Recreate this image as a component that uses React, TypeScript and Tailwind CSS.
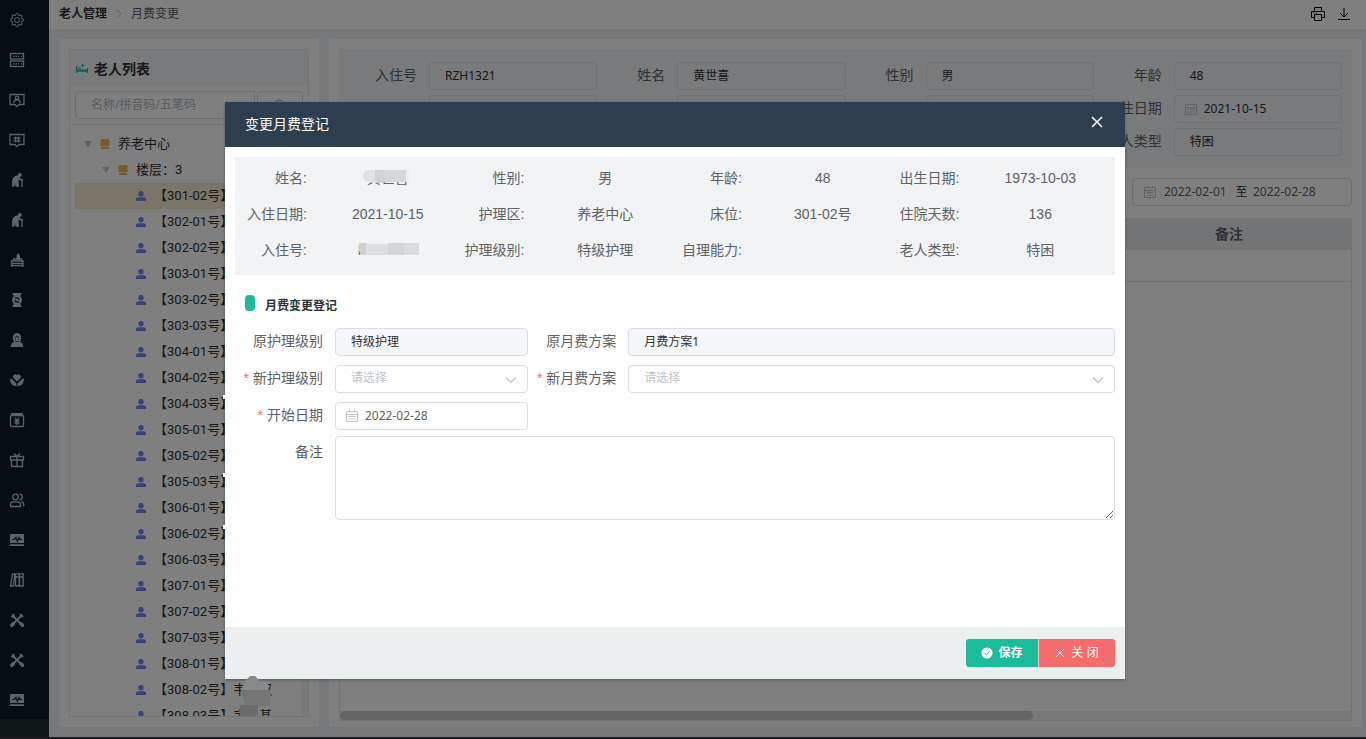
import type { ReactNode } from "react";
import { BsGear } from "react-icons/bs";

const fills = "fill-current stroke-none";

const PulseIcon = (
  <>
    <path className={fills} d="M2 2h12a1 1 0 0 1 1 1v8H1V3a1 1 0 0 1 1-1zM1 12.200h14V14H1z" />
    <path d="M3 7.500h2.500L7 5.500l1.500 4L10 5.500l1 2h2" stroke="#0f1a21" strokeWidth="1.200" />
  </>
);

const ElderIcon = (
  <>
    <circle className={fills} cx="10.800" cy="2.900" r="2" />
    <path className={fills} d="M9.500 3.200C5.500 3.500 3.200 6 3.200 9.500L3 14.800h2.200l.8-3 .7 3h3.500L9.500 10l.3-2.500 2.200 1 2 .3V7.500l-2-.5-1.500-2z" />
    <path d="M13 8v7" />
  </>
);

const ToolsIcon = (
  <>
    <path d="M4 4l8.500 8.500M12.500 3.500l-9 9" strokeWidth="2" />
    <path d="M2 4.500l2.500-.2.200-2.500M11 2l3 3" strokeWidth="2.200" />
    <path d="M12 11.800l1.500 1.500M2.800 13.200l1.500-1.500" strokeWidth="3.500" strokeLinecap="round" />
  </>
);

const menu: { name: string; icon: ReactNode }[] = [
  {
    name: "数据",
    icon: (
      <>
        <rect x="1.500" y="1.500" width="13" height="5.500" />
        <rect x="1.500" y="9" width="13" height="5.500" />
        <path d="M4 4.300h6M12 4.300h1M4 11.800h6M12 11.800h1" strokeDasharray="1.500 1" />
      </>
    ),
  },
  {
    name: "档案",
    icon: (
      <>
        <path d="M1 2.500h14v10h-5L8 14.500l-2-2H1z" />
        <circle cx="8" cy="5.800" r="1.700" />
        <path d="M4.800 11c.3-2.500 1.500-3.500 3.200-3.500s2.900 1 3.200 3.500" />
      </>
    ),
  },
  {
    name: "编号",
    icon: (
      <>
        <path d="M1 2.500h14v10h-5L8 14.500l-2-2H1z" />
        <path d="M6.500 4.500v6M9.500 4.500v6M4.500 6.200h7M4.500 8.800h7" />
      </>
    ),
  },
  { name: "老人", icon: ElderIcon },
  { name: "护理", icon: ElderIcon },
  {
    name: "床位",
    icon: (
      <>
        <path d="M2.500 9h11.500v4.500H2.500zM2.500 11.300H14M3 13v2M13.500 13v2M4.500 9V7h8v2" strokeWidth="1.300" />
        <path className={fills} d="M7.500 7.500V3.500L9.200 1l1.800 2.500v4z" />
      </>
    ),
  },
  {
    name: "膳食",
    icon: (
      <>
        <path className={fills} d="M3.500 1h9v1.500l-2 2h-5l-2-2zM3.500 15h9v-1.500l-2-2h-5l-2 2z" />
        <circle className={fills} cx="8" cy="8" r="5" />
        <path d="M6 6.200c2-.6 3.500 0 4.500 1.300M5.500 8.500c1 1.300 2.500 1.900 4.500 1.300" stroke="#0f1a21" />
      </>
    ),
  },
  {
    name: "护工",
    icon: (
      <>
        <path className={fills} d="M3.800 5.500C3.800 2.800 5.500 1 8 1s4.200 1.800 4.200 4.500c0 2-.5 3.500-1.500 4.500 2.300.4 3.500 2 3.500 5H1.800c0-3 1.200-4.600 3.500-5-1-1-1.500-2.500-1.500-4.500z" />
        <path d="M5.500 5.500l2.500-1 2.500 1M6 7.500h1M9 7.500h1M6.500 9.500h3" stroke="#0f1a21" strokeWidth=".8" />
      </>
    ),
  },
  {
    name: "关爱",
    icon: (
      <>
        <path className={fills} d="M8 9.500L4.500 6a2.200 2.200 0 0 1 3.500-2.700A2.200 2.200 0 0 1 11.500 6z" />
        <path className={fills} d="M1 6.500l2 .5 4.500 4.500v2.800C3.500 14 1 11.500 1 6.500zM15 6.500l-2 .5-4.500 4.500v2.800c4-.3 6.500-2.800 6.500-7.800z" />
      </>
    ),
  },
  {
    name: "费用",
    icon: (
      <>
        <path className={fills} d="M2 1h12v3H2z" />
        <rect x="1.500" y="3.500" width="13" height="11" rx="1" />
        <path d="M6 6l2 2.500L10 6M8 8.500V13M5.500 9h5M5.500 11h5" />
      </>
    ),
  },
  {
    name: "礼品",
    icon: <path d="M1.500 4.500h13V8h-13zM2.500 8v6.500h11V8M8 4.500v10M5 1.500l3 3 3-3" />,
  },
  {
    name: "用户",
    icon: (
      <>
        <circle cx="6.500" cy="5" r="2.800" />
        <path d="M1.500 14.500v-2c0-1.800 1-2.700 2.700-2.700h4.600c1.700 0 2.700.9 2.700 2.700v2zM10.500 2.200a2.800 2.800 0 0 1 0 5.600M12.500 9.800c1.500.3 2.200 1.200 2.200 2.700v2" />
      </>
    ),
  },
  { name: "监测", icon: PulseIcon },
  {
    name: "图书",
    icon: <path d="M3.500 1.800L1.500 14h2.800l1.500-12.200zM6.500 1.800h3.700V14H6.500zM10.500 1.800h3.700V14h-3.700zM6.500 5h7.700" />,
  },
  { name: "维修", icon: ToolsIcon },
  { name: "工具", icon: ToolsIcon },
  { name: "监控", icon: PulseIcon },
];

const beds = [
  "301-02", "302-01", "302-02", "303-01", "303-02", "303-03", "304-01", "304-02", "304-03", "305-01",
  "305-02", "305-03", "306-01", "306-02", "306-03", "307-01", "307-02", "307-03", "308-01", "308-02", "308-03",
];

const names: Record<string, string> = { "308-02": "韦\u3000汉", "308-03": "韦\u3000基" };

const profile = [
  { label: "入住号", value: "RZH1321" },
  { label: "姓名", value: "黄世喜" },
  { label: "性别", value: "男" },
  { label: "年龄", value: "48" },
  { label: "", value: "" },
  { label: "", value: "" },
  { label: "", value: "" },
  { label: "入住日期", value: "2021-10-15", date: true },
  { label: "", value: "" },
  { label: "", value: "" },
  { label: "", value: "" },
  { label: "老人类型", value: "特困" },
];

const facts = [
  { label: "姓名", value: "黄世喜", masked: "name" },
  { label: "性别", value: "男" },
  { label: "年龄", value: "48" },
  { label: "出生日期", value: "1973-10-03" },
  { label: "入住日期", value: "2021-10-15" },
  { label: "护理区", value: "养老中心" },
  { label: "床位", value: "301-02号" },
  { label: "住院天数", value: "136" },
  { label: "入住号", value: "RZH1321", masked: "code" },
  { label: "护理级别", value: "特级护理" },
  { label: "自理能力", value: "" },
  { label: "老人类型", value: "特困" },
];

const small = "font-['Noto_Sans','Noto_Sans_CJK_SC',sans-serif] text-xs";
const box = "h-7 w-full rounded border border-[#dcdfe6] px-[15px] pb-[2px] outline-none";

function CalendarIcon({ className = "" }: { className?: string }) {
  return (
    <svg viewBox="0 0 12 12" className={`size-3 shrink-0 fill-none stroke-[#c0c4cc] ${className}`}>
      <path d="M.5 1.500h11v10H.5zM.5 4.500h11M3.500 0v2.500M8.500 0v2.500M2.500 6.500h7M2.500 9h7" />
    </svg>
  );
}

function ChevronIcon() {
  return (
    <svg viewBox="0 0 12 12" className="pointer-events-none absolute top-[9px] right-[11px] size-3 fill-none stroke-[#c0c4cc]">
      <path d="M1 3.500l5 5 5-5" strokeWidth="1.200" />
    </svg>
  );
}

function UserIcon() {
  return (
    <svg viewBox="0 0 10 10" className="size-[10px] shrink-0 fill-[#6c84f0]">
      <circle cx="5" cy="2.700" r="2.700" />
      <path d="M0 10V8.500C0 7 1 6.300 2.500 6.300h5C9 6.300 10 7 10 8.500V10z" />
    </svg>
  );
}

function HouseIcon() {
  return (
    <svg viewBox="0 0 10 10" className="size-[10px] shrink-0 fill-[#f0b850]">
      <path d="M1.500 0h7L9.500 1v4l.5 2H0L.5 5V1zM1 7.700h8V10H1z" />
    </svg>
  );
}

function Caret() {
  return (
    <svg viewBox="0 0 8 6" className="h-[6px] w-2 shrink-0 fill-[#c0c4cc]">
      <path d="M0 0h8L4 6z" />
    </svg>
  );
}

function Sidebar() {
  return (
    <nav className="flex w-[49px] shrink-0 flex-col bg-[#0f1a21] text-[#b8c8d0]">
      <ul className="min-h-0 flex-1 overflow-hidden">
        <li>
          <a href="#" aria-label="设置" className="flex h-10 items-center pl-[10px]">
            <BsGear className="size-[14px]" />
          </a>
        </li>
        {menu.map((item) => (
          <li key={item.name}>
            <a href="#" aria-label={item.name} className="flex h-10 items-center pl-[9px]">
              <svg viewBox="0 0 16 16" className="size-4 fill-none stroke-current" strokeWidth="1.300">
                {item.icon}
              </svg>
            </a>
          </li>
        ))}
      </ul>
      <div className="h-[18px] bg-[#222c32]" />
    </nav>
  );
}

function ElderTree() {
  return (
    <aside className="flex w-[260px] shrink-0 bg-white p-[10px]">
      <div className="flex min-w-0 flex-1 flex-col border border-[#e8eaed]">
        <h2 className="flex h-9 shrink-0 items-center gap-[6px] bg-[#f2f4f7] px-[6px] pt-[2px] text-sm font-bold text-[#303133]">
          <svg viewBox="0 0 12 10" className="h-[10px] w-3 fill-[#1abc9c]">
            <path d="M0 2h1.200v3.500h9.600V4H12v5h-1.200V7.800H1.200V9H0zM2 3.500h3v1.300H2zM6 0h1v1h1v1H7v1H6V2H5V1h1z" />
          </svg>
          老人列表
        </h2>
        <div className="flex shrink-0 gap-[2px] border-b border-[#e8eaed] px-[5px] py-[5px]">
          <input
            aria-label="搜索老人"
            placeholder="名称/拼音码/五笔码"
            className={`${box} ${small} min-w-0 flex-1 rounded-r-none placeholder:text-[#b4b8c0]`}
          />
          <button aria-label="搜索" className="flex h-7 w-[46px] shrink-0 items-center justify-center rounded border border-[#dcdfe6]">
            <svg viewBox="0 0 12 12" className="size-3 fill-none stroke-[#909399]">
              <path d="M9 9l2.500 2.500" />
              <circle cx="5.500" cy="5.500" r="4.500" />
            </svg>
          </button>
        </div>
        <div className="flex min-h-0 flex-1 overflow-hidden pt-[6px] pl-[5px]">
          <ul className="min-w-0 flex-1 font-[Roboto,'Noto_Sans_CJK_SC',sans-serif] text-[13px] text-[#303133]">
            <li className="flex h-[26px] items-center gap-2 pl-[9px]">
              <Caret />
              <HouseIcon />
              养老中心
            </li>
            <li className="flex h-[26px] items-center gap-2 pl-[27px]">
              <Caret />
              <HouseIcon />
              楼层：3
            </li>
            {beds.map((bed, i) => (
              <li
                key={bed}
                className={`flex h-[26px] items-center gap-2 pl-[61px] whitespace-nowrap ${i === 0 ? "bg-[#f6ebd0]" : ""}`}
              >
                <UserIcon />
                <span>
                  【{bed}号】{names[bed]}
                </span>
              </li>
            ))}
          </ul>
          <div className="w-[6px] rounded bg-[#f3f3f3]" />
        </div>
      </div>
    </aside>
  );
}

function ProfileForm() {
  return (
    <form className="grid shrink-0 grid-cols-4 gap-y-[5px] bg-[#f2f4f7] px-[10px] pt-[13px] pb-3">
      {profile.map((f, i) => (
        <label key={i} className="flex items-center text-sm text-[#606266]">
          <span className="w-20 shrink-0 pr-3 pb-[2px] text-right">{f.label}</span>
          <span className="relative min-w-0 flex-1">
            {f.date && <CalendarIcon className="absolute top-2 left-[11px]" />}
            <input readOnly defaultValue={f.value} className={`${box} ${small} text-[#303133] ${f.date ? "pl-[29px]" : ""}`} />
          </span>
        </label>
      ))}
    </form>
  );
}

function Records() {
  return (
    <section className="flex min-w-0 flex-1 flex-col bg-white p-[10px] pb-[6px]">
      <ProfileForm />
      <div className="flex justify-end py-[10px]">
        <div className={`flex h-7 w-[220px] items-center rounded border border-[#dcdfe6] pl-[11px] ${small}`}>
          <CalendarIcon />
          <input aria-label="起始日期" defaultValue="2022-02-01" className="ml-2 w-[66px] text-[#606266] outline-none" />
          <span className="w-[23px] text-center text-[#303133]">至</span>
          <input aria-label="结束日期" defaultValue="2022-02-28" className="w-[66px] text-[#606266] outline-none" />
        </div>
      </div>
      <div className="mt-[2px] flex min-h-0 flex-1 flex-col justify-between border border-[#e4e7ea]">
        <table className="w-full text-sm text-[#606266]">
          <thead>
            <tr className="h-[31px] bg-[#e6e9ed]">
              <th />
              <th className="w-[244px] pb-[2px] font-bold">备注</th>
            </tr>
          </thead>
          <tbody>
            <tr className="h-[31px] border-b border-[#e4e7ea]">
              <td />
              <td />
            </tr>
          </tbody>
        </table>
        <div className="bg-[#f1f1f1]">
          <div className="h-[9px] w-[68.500%] rounded-full bg-[#c8c8c8]" />
        </div>
      </div>
    </section>
  );
}

function Mask({ kind }: { kind: string }) {
  return (
    <svg viewBox="0 0 64 14" className="absolute top-[10px] left-1/2 h-[14px] w-16 -translate-x-1/2">
      {kind === "name" ? (
        <>
          <path d="M7 5c0-5 6-6 10-5h3v12h-8C8 12 7 8 7 5z" fill="#dfe1e2" />
          <path d="M19 0h9v13h-9z" fill="#cfd3d7" />
          <path d="M28 0h22v12H28z" fill="#d5d7d9" />
          <path d="M50 0h4v12h-4z" fill="#eceef0" />
        </>
      ) : (
        <>
          <path d="M3 1h8v12H6C3 12 2 5 3 1z" fill="#cdd1d4" />
          <path d="M10 2h23v11H10z" fill="#dcdedf" />
          <path d="M32 1h17v12H32z" fill="#d3d5d6" />
          <path d="M48 1h15v12H48z" fill="#d9dcdf" />
        </>
      )}
    </svg>
  );
}

type FieldProps = { label: string; required?: boolean; top?: boolean; className?: string; children: ReactNode };

function Field({ label, required, top, className = "", children }: FieldProps) {
  return (
    <label className={`flex ${top ? "items-start" : "items-center"} ${className}`}>
      <span className={`w-[100px] shrink-0 pr-3 text-right ${top ? "pt-[6px]" : "pb-[2px]"}`}>
        {required && <span className="mr-1 text-[#f56c6c]">*</span>}
        {label}
      </span>
      <span className="relative flex min-w-0 flex-1">{children}</span>
    </label>
  );
}

function PickSelect() {
  return (
    <>
      <select className={`${box} ${small} appearance-none bg-white text-[#c0c4cc]`}>
        <option>请选择</option>
      </select>
      <ChevronIcon />
    </>
  );
}

function FeeDialog() {
  return (
    <div role="dialog" aria-label="变更月费登记" className="relative w-full max-w-[900px] bg-white shadow-[0_1px_3px_rgba(0,0,0,0.3)]">
      <header className="flex h-[45px] items-center justify-between bg-[#2c3e50] px-5 pb-[2px] text-sm text-white">
        <h2>变更月费登记</h2>
        <button aria-label="关闭窗口" className="pr-[2px] pb-1">
          <svg viewBox="0 0 12 12" className="size-3 fill-none stroke-white" strokeWidth="1.500">
            <path d="M1 1l10 10M11 1L1 11" />
          </svg>
        </button>
      </header>

      <div className="min-h-[480px] p-[10px] text-sm text-[#606266]">
        <dl className="grid grid-cols-4 bg-[#f2f3f5] pt-[3px] pr-[6px] pb-[7px] pl-1 leading-9">
          {facts.map((f) => (
            <div key={f.label} className="flex">
              <dt className="w-20 shrink-0 pr-3 text-right">{f.label}:</dt>
              <dd className="relative flex-1 text-center">
                {f.value}
                {f.masked && <Mask kind={f.masked} />}
              </dd>
            </div>
          ))}
        </dl>

        <h3 className="mt-5 mb-[11px] flex gap-[10px] pl-[10px] text-xs leading-[22px] font-bold text-[#303133]">
          <span className="h-4 w-[10px] rounded bg-[#1abc9c]" />
          月费变更登记
        </h3>

        <form>
          <div className="grid grid-cols-[1fr_2fr] gap-y-[9px]">
            <Field label="原护理级别">
              <input readOnly defaultValue="特级护理" className={`${box} ${small} bg-[#f5f7fa] text-[#303133]`} />
            </Field>
            <Field label="原月费方案">
              <input readOnly defaultValue="月费方案1" className={`${box} ${small} bg-[#f5f7fa] text-[#303133]`} />
            </Field>
            <Field label="新护理级别" required>
              <PickSelect />
            </Field>
            <Field label="新月费方案" required>
              <PickSelect />
            </Field>
            <Field label="开始日期" required>
              <CalendarIcon className="absolute top-2 left-[11px]" />
              <input defaultValue="2022-02-28" className={`${box} ${small} pl-[29px]`} />
            </Field>
          </div>
          <Field label="备注" top className="mt-[6px]">
            <textarea className={`${small} h-[84px] w-full rounded border border-[#dcdfe6] px-[15px] py-[5px] outline-none`} />
          </Field>
        </form>
      </div>

      <footer className="flex justify-end bg-[#ebeff0] px-[10px] py-3 text-xs text-white">
        <button className="flex h-7 w-[72px] items-center justify-center gap-[5px] rounded-l-[3px] bg-[#1abc9c] font-bold">
          <svg viewBox="0 0 12 12" className="size-3 fill-white">
            <circle cx="6" cy="6" r="5.600" />
            <path d="M3.500 6l2 1.800 3-3.300" fill="none" stroke="#1abc9c" />
          </svg>
          保存
        </button>
        <button className="flex h-7 w-[77px] items-center justify-center gap-[6px] rounded-r-[3px] border-l border-[#fbc4c4] bg-[#f56c6c]">
          <svg viewBox="0 0 10 10" className="size-[10px] fill-none stroke-white">
            <path d="M1 1l8 8M9 1L1 9" />
          </svg>
          关 闭
        </button>
      </footer>

      <svg viewBox="0 0 36 40" className="absolute top-[574px] left-[14px] h-10 w-9">
        <path d="M8 3l3-3h5l3 3v2l10 1v8H2l3-7z" fill="#888989" />
        <path d="M2 14h29l1 8-1 8H6z" fill="#757575" />
        <path d="M1 29h18v10l-5 1H3l-3-3z" fill="#6b6b6b" />
      </svg>
      <span className="absolute top-[293px] -left-[2px] h-1 w-[2px] bg-white" />
      <span className="absolute top-[371px] -left-[2px] h-1 w-[2px] bg-white" />
      <span className="absolute top-[423px] -left-[2px] h-1 w-[2px] bg-white" />
    </div>
  );
}

export default function App() {
  return (
    <div className="relative flex h-screen flex-col overflow-hidden bg-[#1c1c1e] pb-[2px] font-['Liberation_Sans','Noto_Sans_CJK_SC',sans-serif]">
      <div className="relative flex min-h-0 flex-1">
        <Sidebar />
        <div className="flex min-w-0 flex-1 flex-col bg-[#eef0f3]">
          <header className="flex h-[29px] shrink-0 items-center justify-between bg-white pr-4 pb-[2px] pl-[10px] text-xs">
            <div className="flex items-center">
              <a href="#" className="font-bold text-[#303133]">
                老人管理
              </a>
              <svg viewBox="0 0 6 10" className="mx-[9px] h-[10px] w-[6px] fill-none stroke-[#c0c4cc]">
                <path d="M1 .5L5 5 1 9.500" />
              </svg>
              <span className="text-[#606266]">月费变更</span>
            </div>
            <div className="flex items-center gap-[13px] text-black">
              <button aria-label="打印">
                <svg viewBox="0 0 14 14" className="size-[14px] fill-none stroke-current">
                  <path d="M3.500 4V.5h7V4M3.500 10.500h-3v-6h13v6h-3M3.500 7.500h7v6h-7zM2.500 6h1M5 6h1" />
                </svg>
              </button>
              <button aria-label="下载">
                <svg viewBox="0 0 12 12" className="size-3 fill-none stroke-current">
                  <path d="M6 0v9M2 5l4 4 4-4M0 11.500h12" />
                </svg>
              </button>
            </div>
          </header>
          <main className="flex min-h-0 flex-1 gap-[10px] p-[10px] pr-1">
            <ElderTree />
            <Records />
          </main>
        </div>
        <div className="absolute inset-0 flex items-start justify-center bg-black/50 pt-[102px] pr-4">
          <FeeDialog />
        </div>
      </div>
    </div>
  );
}
